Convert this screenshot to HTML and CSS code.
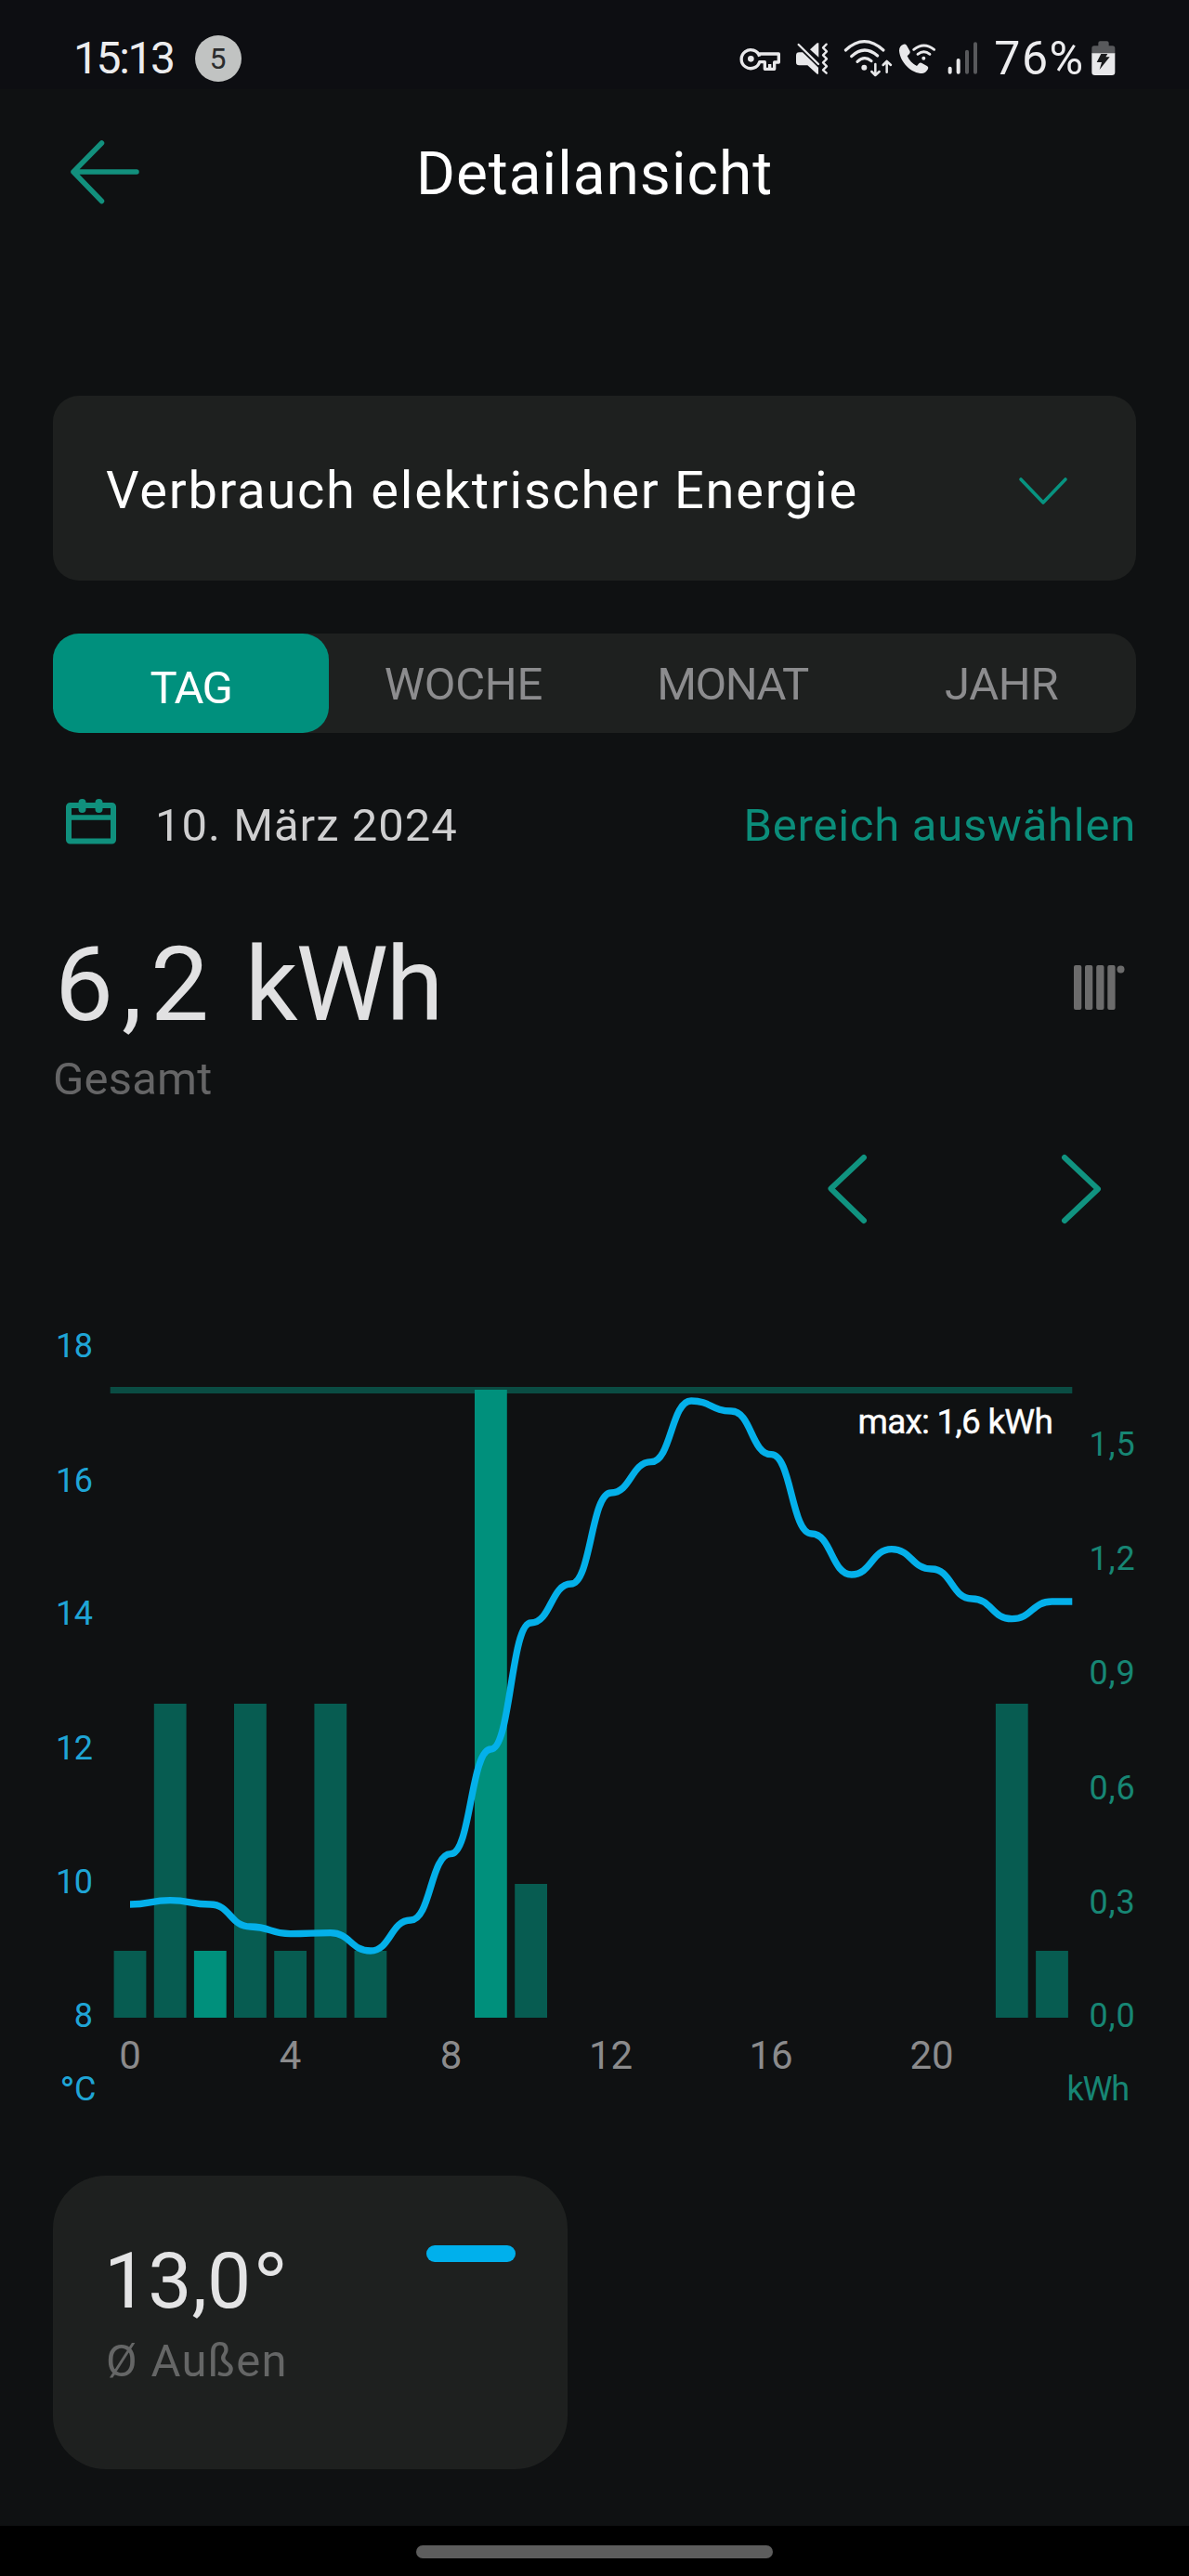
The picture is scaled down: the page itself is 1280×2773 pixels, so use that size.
FILE: index.html
```html
<!DOCTYPE html>
<html lang="de">
<head>
<meta charset="utf-8">
<title>Detailansicht</title>
<link rel="stylesheet" href="styles.css">
</head>
<body>
<div class="statusbar">
  <span class="clock">15:13</span>
  <span class="badge">5</span>
  <div class="status-icons">
    <svg class="icon-key" width="44" height="43.33" viewBox="48 62 132 130">
      <g fill="none" stroke="#e8e8ea" stroke-width="10" stroke-linejoin="round">
        <path d="M113 121 A30 30 0 1 0 113 139 H130 V162 H161 V140 H175 V113 H110"/>
        <path d="M146 162V146"/>
      </g>
      <circle cx="85" cy="129" r="10" fill="#e8e8ea"/>
    </svg>
    <svg class="icon-mute" width="36" height="43.33" viewBox="228 62 108 130">
      <path d="M231 118Q231 108 241 108H252L303 157V178H299L268 150H241Q231 150 231 140Z" fill="#e8e8ea"/>
      <path d="M276 99L299 78H304V124Z" fill="#e8e8ea"/>
      <path d="M239 83L303 146" stroke="#e8e8ea" stroke-width="7" stroke-linecap="round"/>
      <path d="M329 82L318 93L330 105L318 117L330 129L318 141L330 153L318 165L329 175" fill="none" stroke="#e8e8ea" stroke-width="7" stroke-linecap="round" stroke-linejoin="round"/>
    </svg>
    <svg class="icon-wifi" width="53.33" height="43.33" viewBox="384 62 160 130">
      <g fill="none" stroke="#e8e8ea" stroke-width="9.500" stroke-linecap="round" stroke-linejoin="round">
        <path d="M391 101Q451 45 513 101"/>
        <path d="M410 121Q451 82 494 119"/>
        <path d="M429 138Q452 117 474 136"/>
        <path d="M487 146V181M475 170L487 182L500 170M524 172V137M512 149L524 137L537 149" stroke-width="7.500"/>
      </g>
      <circle cx="451" cy="157" r="9" fill="#e8e8ea"/>
    </svg>
    <svg class="icon-call" width="40.67" height="43.33" viewBox="562 62 122 130">
      <path d="M579 82Q565 87 565 103C568 140 604 176 640 176Q652 174 658 162Q661 157 656 153L637 142Q632 140 629 144L622 152C608 146 597 134 591 120L598 113Q601 110 600 105L589 85Q585 80 579 82Z" fill="#e8e8ea"/>
      <g fill="none" stroke="#e8e8ea" stroke-width="8.500" stroke-linecap="round">
        <path d="M612 99Q645 73 678 99"/>
        <path d="M625 114Q645 98 664 114"/>
      </g>
      <circle cx="644" cy="127" r="6" fill="#e8e8ea"/>
    </svg>
    <svg class="icon-signal" width="33.33" height="43.33" viewBox="720 62 100 130">
      <g stroke-width="12" stroke-linecap="round">
        <path d="M728 160V172M755 134V172" stroke="#e8e8ea"/>
        <path d="M783 106V172M810 81V172" stroke="#58595c"/>
      </g>
    </svg>
    <span class="percent">76%</span>
    <svg class="icon-battery" width="26" height="43.33" viewBox="1186 62 78 130">
      <path d="M1187 112V95Q1187 87 1195 87H1208V78Q1208 72 1214 72H1236Q1242 72 1242 78V87H1254Q1262 87 1262 95V112Z" fill="#58595c"/>
      <path d="M1187 111H1262V172Q1262 182 1252 182H1197Q1187 182 1187 172Z" fill="#e8e8ea"/>
      <path d="M1217 113H1238L1232 123H1245L1212 164L1219 140H1203Z" fill="#1a1b1d"/>
    </svg>
  </div>
</div>

<header class="header">
  <svg width="76" height="70" viewBox="0 0 76 70" fill="none" stroke="#12907d" stroke-width="5.5" stroke-linecap="round" stroke-linejoin="round">
    <path d="M35.5 3L5 34L35.5 65.500M5 34H73"/>
  </svg>
  <h1 class="title">Detailansicht</h1>
</header>

<main class="content">
  <div class="select">
    <span class="select-label">Verbrauch elektrischer Energie</span>
    <svg width="54" height="32" viewBox="0 0 54 32" fill="none" stroke="#079380" stroke-width="3.6" stroke-linecap="round" stroke-linejoin="round">
      <path d="M2 4L26 29L50 4"/>
    </svg>
  </div>

  <nav class="tabs">
    <span class="tab tab-active">TAG</span>
    <span class="tab">WOCHE</span>
    <span class="tab tab-month">MONAT</span>
    <span class="tab">JAHR</span>
  </nav>

  <div class="date-row">
    <svg width="54" height="52" viewBox="0 0 54 52" fill="none" stroke="#10907d">
      <rect x="3" y="9" width="48" height="38.500" rx="1.500" stroke-width="6"/>
      <path d="M3 22H51" stroke-width="5.500"/>
      <path d="M17.500 6V13M35.500 6V13" stroke-width="8" stroke-linecap="round"/>
    </svg>
    <span class="date">10. März 2024</span>
    <a class="range">Bereich auswählen</a>
  </div>

  <div class="total-row">
    <span class="total"><span class="number">6,2</span> kWh</span>
    <svg width="52" height="50" viewBox="0 0 52 50" fill="#6c6c6c">
      <rect x="0" y="1" width="8.300" height="48" rx="2"/>
      <rect x="12" y="1" width="8.300" height="48" rx="2"/>
      <rect x="24.200" y="1" width="8.300" height="48" rx="2"/>
      <rect x="36.300" y="1" width="8.300" height="48" rx="2"/>
      <circle cx="50.500" cy="5.500" r="4"/>
    </svg>
  </div>
  <div class="total-label">Gesamt</div>

  <div class="pager">
    <svg width="44" height="74" viewBox="0 0 44 74"><path d="M39 3L3.500 36.500L39 71"/></svg>
    <svg width="44" height="74" viewBox="0 0 44 74"><path d="M4 3L40 37L4 71"/></svg>
  </div>

  <svg class="chart" width="1166" height="880" viewBox="57 1400 1166 880">
    <rect class="max-line" x="118.700" y="1493" width="1035.600" height="7"/>
    <g class="bars">
      <rect x="122.600" y="2100" width="34.800" height="72"/>
      <rect x="165.800" y="1834" width="34.800" height="338"/>
      <rect class="strong" x="208.900" y="2100" width="34.800" height="72"/>
      <rect x="252" y="1834" width="34.800" height="338"/>
      <rect x="295.200" y="2100" width="34.800" height="72"/>
      <rect x="338.400" y="1834" width="34.800" height="338"/>
      <rect x="381.500" y="2100" width="34.800" height="72"/>
      <rect class="strong" x="511" y="1496" width="34.800" height="676"/>
      <rect x="554.200" y="2028" width="34.800" height="144"/>
      <rect x="1071.900" y="1834" width="34.800" height="338"/>
      <rect x="1115.100" y="2100" width="34.800" height="72"/>
    </g>
    <path class="temp" d="M140 2050C161.600 2050 161.600 2045.700 183.200 2045.700S204.700 2050 226.300 2050S247.900 2074 269.500 2074S291 2081.700 312.600 2081.700S334.200 2080.700 355.800 2080.700S377.300 2100 398.900 2100S420.500 2067 442.100 2067S463.600 1995.700 485.200 1995.700S506.800 1883 528.400 1883S549.900 1747 571.500 1747S593.100 1705 614.700 1705S636.200 1607 657.800 1607S679.400 1573.700 701 1573.700S722.500 1508 744.100 1508S765.700 1519 787.300 1519S808.800 1565.700 830.400 1565.700S852 1651 873.600 1651S895.100 1695 916.700 1695S938.300 1667.700 959.900 1667.700S981.400 1689 1003 1689S1024.600 1721 1046.200 1721S1067.700 1742.700 1089.300 1742.700S1110.900 1724 1132.500 1724H1154.300"/>
    <g class="axis axis-temp" text-anchor="end">
      <text x="99.500" y="1461">18</text>
      <text x="99.500" y="1605.500">16</text>
      <text x="99.500" y="1749">14</text>
      <text x="99.500" y="1894">12</text>
      <text x="99.500" y="2038">10</text>
      <text x="99.500" y="2182">8</text>
      <text x="103" y="2261"><tspan class="axis-degree" dy="6">°</tspan><tspan dy="-6">C</tspan></text>
    </g>
    <g class="axis axis-energy">
      <text x="1172.500" y="1567">1,5</text>
      <text x="1172.500" y="1690">1,2</text>
      <text x="1172.500" y="1813">0,9</text>
      <text x="1172.500" y="1936.500">0,6</text>
      <text x="1172.500" y="2060">0,3</text>
      <text x="1172.500" y="2182">0,0</text>
      <text class="axis-unit" x="1148.500" y="2261">kWh</text>
    </g>
    <g class="axis-hours" text-anchor="middle">
      <text x="140" y="2226.500">0</text>
      <text x="312.500" y="2226.500">4</text>
      <text x="485.500" y="2226.500">8</text>
      <text x="657.500" y="2226.500">12</text>
      <text x="830" y="2226.500">16</text>
      <text x="1003" y="2226.500">20</text>
    </g>
    <text class="max-label" x="923.500" y="1543">max: 1,6 kWh</text>
  </svg>

  <section class="card">
    <div class="card-text">
      <span class="card-value">13,0<span class="degree">°</span></span>
      <span class="card-label">Ø Außen</span>
    </div>
    <span class="swatch"></span>
  </section>
</main>

<footer class="navbar"><span class="handle"></span></footer>
</body>
</html>
```
FILE: styles.css
```css
* {
  box-sizing: border-box;
}

body {
  margin: 0;
  width: 1280px;
  height: 2773px;
  display: flex;
  flex-direction: column;
  overflow: hidden;
  background: #0f1112;
  color: #fff;
  font-family: Roboto, "Liberation Sans", sans-serif;
}

svg {
  display: block;
  flex: none;
  overflow: visible;
}

.statusbar {
  display: flex;
  align-items: center;
  height: 96px;
  padding: 29px 78.7px 0 79px;
  background: #0d0e12;
  color: #ececee;
  font-size: 48px;
  line-height: 60px;
}

.clock {
  width: 130.5px;
  letter-spacing: -2.4px;
}

.badge {
  width: 50px;
  height: 50px;
  border-radius: 50%;
  background: #c1c3c2;
  color: #2b2c2d;
  font-size: 32px;
  line-height: 51px;
  text-align: center;
}

.status-icons {
  display: flex;
  align-items: center;
  margin-left: auto;
}

.icon-mute,
.icon-wifi {
  margin-left: 16px;
}

.icon-call {
  margin-left: 6px;
}

.icon-signal {
  margin-left: 12px;
}

.percent {
  width: 104px;
  margin-left: 17px;
  font-size: 50px;
  letter-spacing: 1.5px;
}

.icon-battery {
  margin-left: 1px;
}

.header {
  display: grid;
  grid-template-columns: 76px 1fr 76px;
  align-items: center;
  height: 180px;
  padding: 0 74px;
}

.title {
  margin: 0;
  padding-top: 3px;
  font-size: 64px;
  font-weight: 400;
  letter-spacing: 1px;
  line-height: 80px;
  text-align: center;
}

.content {
  flex: 1;
  display: flex;
  flex-direction: column;
  padding: 150px 57px 0;
}

.select {
  display: flex;
  align-items: center;
  justify-content: space-between;
  height: 199px;
  padding: 5px 72px 0 57px;
  border-radius: 28px;
  background: #1e201f;
}

.select-label {
  font-size: 56px;
  letter-spacing: 1.75px;
}

.tabs {
  display: grid;
  grid-template-columns: 297px 1fr 1fr 1fr;
  height: 107px;
  margin-top: 57px;
  border-radius: 28px;
  background: #1e201f;
}

.tab {
  height: 107px;
  color: #8c8c8e;
  font-size: 49px;
  letter-spacing: -0.3px;
  line-height: 110px;
  text-align: center;
}

.tab-month {
  letter-spacing: -1.5px;
}

.tab-active {
  padding-top: 4px;
  border-radius: 28px;
  background: #00907d;
  color: #fff;
  letter-spacing: -1.5px;
}

.date-row {
  display: flex;
  align-items: center;
  height: 100px;
  margin-top: 49px;
  padding-left: 14px;
  font-size: 49px;
}

.date-row svg {
  margin-bottom: 8px;
}

.date {
  margin-left: 42px;
  color: #cfcfd0;
  letter-spacing: 1px;
}

.range {
  margin-left: auto;
  color: #0b8d7a;
  letter-spacing: 0.75px;
}

.total-row {
  display: flex;
  align-items: center;
  justify-content: space-between;
  height: 160px;
  margin-top: 42px;
  padding: 0 15px 0 2px;
}

.total {
  color: #e1e1e2;
  font-size: 112px;
  letter-spacing: -2px;
  line-height: 160px;
}

.number {
  margin-right: 4px;
  letter-spacing: 9px;
}

.total-row svg {
  margin-top: 6px;
}

.total-label {
  color: #656566;
  font-size: 49px;
  letter-spacing: 0.2px;
  line-height: 44px;
}

.pager {
  display: flex;
  justify-content: flex-end;
  gap: 207.500px;
  margin-top: 59px;
  padding-right: 37px;
}

.pager path {
  fill: none;
  stroke: #109380;
  stroke-width: 6px;
  stroke-linecap: round;
  stroke-linejoin: round;
}

.chart {
  margin-top: 83px;
}

.max-line {
  fill: #0a4c43;
}

.bars {
  fill: #075c51;
}

.strong {
  fill: #00907c;
}

.temp {
  fill: none;
  stroke: #04b0ea;
  stroke-width: 7.3px;
}

.axis {
  font-size: 36px;
}

.axis-temp {
  fill: #1fa5d6;
}

.axis-temp text {
  letter-spacing: -0.5px;
}

.axis-degree {
  font-size: 44px;
}

.axis-energy {
  fill: #178674;
  letter-spacing: 0.8px;
}

.axis-unit {
  letter-spacing: -1.2px;
}

.axis-hours {
  fill: #8b8b8c;
  font-size: 42px;
}

.max-label {
  fill: #fff;
  font-size: 37px;
  letter-spacing: -0.8px;
  stroke: #fff;
  stroke-width: 0.4px;
}

.card {
  display: flex;
  justify-content: space-between;
  width: 554px;
  height: 316px;
  margin-top: 62px;
  padding: 64px 56px 0 57px;
  border-radius: 57px;
  background: #1e201f;
}

.card-text {
  display: flex;
  flex-direction: column;
}

.card-value {
  height: 100px;
  margin-left: -2px;
  color: #e4e4e5;
  font-size: 84px;
  line-height: 100px;
}

.degree {
  font-family: "DejaVu Sans", sans-serif;
  line-height: 0;
  vertical-align: -2px;
}

.card-label {
  color: #656666;
  font-size: 49px;
  letter-spacing: 1.3px;
  line-height: 72px;
}

.swatch {
  width: 96px;
  height: 18px;
  margin-top: 11px;
  border-radius: 9px;
  background: #00b0ec;
}

.navbar {
  display: flex;
  justify-content: center;
  height: 54px;
  padding-top: 21px;
  background: #000;
}

.handle {
  width: 384px;
  height: 14px;
  border-radius: 7px;
  background: #5d5d5d;
}
```
